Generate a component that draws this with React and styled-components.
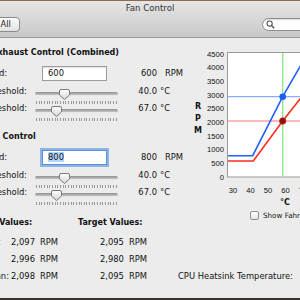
import React from "react";
import styled, { createGlobalStyle } from "styled-components";

const GlobalStyle = createGlobalStyle`
  html, body {
    margin: 0;
    padding: 0;
    background: #3a322c;
  }
  body {
    width: 300px;
    height: 300px;
    overflow: hidden;
    font-family: "DejaVu Sans", "Noto Sans", sans-serif;
  }
`;

const Screen = styled.div`
  width: 300px;
  height: 300px;
  overflow: hidden;
  display: flex;
  flex-direction: column;
  background: #3a322c;
  border-top: 1px solid #8b6a4f;
  box-sizing: border-box;
`;

const Window = styled.div`
  width: 420px;
  height: 297px;
  margin-left: -60px;
  flex-shrink: 0;
  background: #ececec;
  display: flex;
  flex-direction: column;
  font-size: 8.4px;
  color: #111;
`;

const Toolbar = styled.div`
  height: 36px;
  border-bottom: 1px solid #9a9a9a;
  background: linear-gradient(#e6e6e6, #c8c8c8);
  display: flex;
  flex-direction: column;
`;

const Title = styled.div`
  height: 15px;
  line-height: 15px;
  text-align: center;
  font-size: 8.6px;
  color: #333;
`;

const ToolRow = styled.div`
  display: flex;
  justify-content: space-between;
  align-items: flex-start;
  padding: 1px 8px 0 26px;
`;

const ShowAll = styled.button`
  width: 54px;
  height: 15px;
  padding: 0;
  border: 1px solid #8a8a8a;
  border-radius: 4px;
  background: linear-gradient(#fdfdfd, #e2e2e2);
  font: inherit;
  font-size: 8.4px;
  color: #222;
  line-height: 13px;
`;

const Search = styled.div`
  width: 90px;
  height: 13px;
  margin-top: 1px;
  box-sizing: border-box;
  border: 1px solid #8e8e8e;
  border-radius: 7px;
  background: #fff;
  box-shadow: inset 0 1px 1px rgba(0, 0, 0, 0.15);
  display: flex;
  align-items: center;
  padding-left: 3px;
`;

const Content = styled.div`
  display: flex;
  padding-left: 15px;
`;

const LeftPanel = styled.div`
  width: 239px;
  flex-shrink: 0;
  padding-top: 9px;
  display: flex;
  flex-direction: column;
`;

const Section = styled.section`
  display: flex;
  flex-direction: column;
  margin-top: ${(p) => p.$top || 0}px;
`;

const Heading = styled.div`
  height: 12px;
  line-height: 12px;
  font-size: 8px;
  font-weight: bold;
  white-space: nowrap;
  text-indent: ${(p) => p.$indent || 0}px;
`;

const FieldGrid = styled.div`
  display: grid;
  grid-template-columns: 80px 83px 39px auto;
  grid-template-rows: 18px 17px 18px;
  align-items: center;
  margin-top: 5px;
  white-space: nowrap;
`;

const Label = styled.span`
  white-space: nowrap;
`;

const Field = styled.div`
  width: 65px;
  height: 15px;
  margin-left: 7px;
  box-sizing: border-box;
  border: 1px solid ${(p) => (p.$focused ? "#5b8fd6" : "#9c9c9c")};
  background: #fff;
  box-shadow: ${(p) =>
    p.$focused
      ? "0 0 0 2px rgba(110, 160, 230, 0.75)"
      : "inset 0 1px 1px rgba(0,0,0,0.12)"};
  padding-left: 5px;
  line-height: 13px;
`;

const Selected = styled.span`
  background: ${(p) => (p.$on ? "#b5d5fe" : "transparent")};
`;

const Number = styled.span`
  text-align: right;
`;

const Unit = styled.span`
  padding-left: ${(p) => p.$gap}px;
`;

const SliderBox = styled.div`
  position: relative;
  width: 83px;
  height: 16px;
  margin-top: 12px;
`;

const Track = styled.div`
  position: absolute;
  left: 0;
  right: 0;
  top: 3px;
  height: 3px;
  border-radius: 2px;
  background: linear-gradient(#8f8f8f, #c4c4c4);
  border-bottom: 1px solid #e8e8e8;
`;

const Ticks = styled.div`
  position: absolute;
  left: 1px;
  right: 1px;
  top: 12px;
  height: 3px;
  display: flex;
  justify-content: space-between;
`;

const Tick = styled.i`
  width: 1px;
  height: 3px;
  background: #9a9a9a;
`;

const Thumb = styled.svg`
  position: absolute;
  top: 0;
`;

const Values = styled.section`
  margin-top: 16px;
  display: flex;
  flex-direction: column;
  white-space: nowrap;
`;

const ValuesHead = styled.div`
  display: flex;
  padding-left: 7px;
  height: 12px;
  line-height: 12px;
  font-size: 8px;
  font-weight: bold;
`;

const HeadCell = styled.span`
  width: ${(p) => p.$w}px;
`;

const ValuesGrid = styled.div`
  display: grid;
  grid-template-columns: 39px 46px 90px auto;
  grid-auto-rows: 17px;
  align-items: center;
  padding-left: 17px;
  margin-top: 4px;
`;

const Reading = styled.span`
  text-align: right;
`;

const Extra = styled.span`
  padding-left: 31px;
`;

const ExtraValue = styled.span`
  padding-left: 14px;
`;

const RightPanel = styled.div`
  margin-top: 7px;
  display: flex;
  flex-direction: column;
`;

const ChartRow = styled.div`
  display: flex;
`;

const AxisTitle = styled.div`
  width: 8px;
  padding-top: 56px;
  display: flex;
  flex-direction: column;
  align-items: center;
  font-size: 8px;
  font-weight: bold;
  line-height: 12px;
`;

const AxisUnit = styled.div`
  height: 12px;
  line-height: 12px;
  padding-left: 86px;
  font-size: 8px;
  font-weight: bold;
`;

const CheckRow = styled.label`
  height: 12px;
  display: flex;
  align-items: center;
  gap: 4px;
  padding-left: 56px;
  white-space: nowrap;
  font-size: 7.2px;
`;

const Box = styled.span`
  width: 9px;
  height: 9px;
  box-sizing: border-box;
  border: 1px solid #8e8e8e;
  border-radius: 2px;
  background: linear-gradient(#ffffff, #e6e6e6);
`;

const Slider = ({ pos }) => (
  <SliderBox>
    <Track />
    <Ticks>
      {Array.from({ length: 31 }, (_, i) => (
        <Tick key={i} />
      ))}
    </Ticks>
    <Thumb
      width="11"
      height="11"
      viewBox="0 0 11 11"
      style={{ left: `${pos * 83 - 5.5}px` }}
    >
      <defs>
        <linearGradient id="thumbFill" x1="0" y1="0" x2="0" y2="1">
          <stop offset="0" stopColor="#ffffff" />
          <stop offset="1" stopColor="#d4d4d4" />
        </linearGradient>
      </defs>
      <path
        d="M2 0.5 H9 Q10.5 0.5 10.5 2 V6 L5.5 10.5 L0.5 6 V2 Q0.5 0.5 2 0.5 Z"
        fill="url(#thumbFill)"
        stroke="#7a7a7a"
        strokeWidth="1"
      />
    </Thumb>
  </SliderBox>
);

const ControlBlock = ({ title, indent, top, speed, focused, lower, upper }) => (
  <Section $top={top}>
    <Heading $indent={indent}>{title}</Heading>
    <FieldGrid>
      <Label>Base Speed:</Label>
      <Field $focused={focused}>
        <Selected $on={focused}>{speed}</Selected>
      </Field>
      <Number>{speed}</Number>
      <Unit $gap={8}>RPM</Unit>

      <Label>Lower Threshold:</Label>
      <Slider pos={lower.pos} />
      <Number>{lower.value}</Number>
      <Unit $gap={3}>°C</Unit>

      <Label>Upper Threshold:</Label>
      <Slider pos={upper.pos} />
      <Number>{upper.value}</Number>
      <Unit $gap={3}>°C</Unit>
    </FieldGrid>
  </Section>
);

const yTicks = [4500, 4000, 3500, 3000, 2500, 2000, 1500, 1000, 500, 0];
const xTicks = [30, 40, 50, 60, 70];
const yOf = (v) => 132 - (v * 123) / 4500;
const xOf = (t) => 31 + (t - 30) * 1.75;

const Chart = () => (
  <svg width="140" height="152" viewBox="0 0 140 152">
    <rect x="25.5" y="7.5" width="120" height="124.5" fill="#fff" stroke="#9a9a9a" />
    {yTicks.map((v) => (
      <text
        key={v}
        x="22"
        y={yOf(v) + 2.8}
        textAnchor="end"
        fontSize="7.6"
        fontFamily="Liberation Sans, Arial, sans-serif"
        fill="#111"
      >
        {v}
      </text>
    ))}
    {xTicks.map((t) => (
      <text
        key={t}
        x={xOf(t)}
        y="147.7"
        textAnchor="middle"
        fontSize="7.6"
        fontFamily="Liberation Sans, Arial, sans-serif"
        fill="#111"
      >
        {t}
      </text>
    ))}
    <line x1="80.7" y1="8" x2="80.7" y2="131.5" stroke="#8ee68e" strokeWidth="1.4" />
    <line x1="26" y1="51.7" x2="140" y2="51.7" stroke="#86acff" strokeWidth="1.3" />
    <line x1="26" y1="76" x2="140" y2="76" stroke="#ffa0a0" strokeWidth="1.3" />
    <polyline
      points="26,110.7 50.7,110.7 80.7,51.7 98,21.7 106.5,8"
      fill="none"
      stroke="#2160ff"
      strokeWidth="1.6"
    />
    <polyline
      points="26,116 51.3,116 80.7,76 98,54 135,8"
      fill="none"
      stroke="#ff2b1c"
      strokeWidth="1.6"
    />
    <circle cx="80.7" cy="51.7" r="3.3" fill="#1d5cff" />
    <circle cx="80.7" cy="76" r="3.2" fill="#8c1010" stroke="#d02020" strokeWidth="0.8" />
  </svg>
);

export default function App() {
  return (
    <>
      <GlobalStyle />
      <Screen>
        <Window>
          <Toolbar>
            <Title>Fan Control</Title>
            <ToolRow>
              <ShowAll>Show All</ShowAll>
              <Search>
                <svg width="9" height="9" viewBox="0 0 9 9">
                  <circle cx="3.6" cy="3.6" r="2.6" fill="none" stroke="#555" strokeWidth="1.1" />
                  <line x1="5.5" y1="5.5" x2="8.2" y2="8.2" stroke="#555" strokeWidth="1.4" />
                </svg>
              </Search>
            </ToolRow>
          </Toolbar>

          <Content>
            <LeftPanel>
              <ControlBlock
                title="Intake & Exhaust Control (Combined)"
                indent={-4}
                speed="600"
                lower={{ pos: 0.35, value: "40.0" }}
                upper={{ pos: 0.265, value: "67.0" }}
              />
              <ControlBlock
                title="Intake Fan Control"
                indent={-2.5}
                top={14}
                speed="800"
                focused
                lower={{ pos: 0.35, value: "40.0" }}
                upper={{ pos: 0.265, value: "67.0" }}
              />

              <Values>
                <ValuesHead>
                  <HeadCell $w={116}>Current Values:</HeadCell>
                  <HeadCell $w={90}>Target Values:</HeadCell>
                </ValuesHead>
                <ValuesGrid>
                  <span>Intake:</span>
                  <Reading>
                    2,097<Unit $gap={5}>RPM</Unit>
                  </Reading>
                  <Reading>
                    2,095<Unit $gap={5}>RPM</Unit>
                  </Reading>
                  <span />

                  <span>HDD:</span>
                  <Reading>
                    2,996<Unit $gap={5}>RPM</Unit>
                  </Reading>
                  <Reading>
                    2,980<Unit $gap={5}>RPM</Unit>
                  </Reading>
                  <span />

                  <span>CPU Fan:</span>
                  <Reading>
                    2,098<Unit $gap={5}>RPM</Unit>
                  </Reading>
                  <Reading>
                    2,095<Unit $gap={5}>RPM</Unit>
                  </Reading>
                  <Extra>
                    CPU Heatsink Temperature:<ExtraValue>58.6 °C</ExtraValue>
                  </Extra>
                </ValuesGrid>
              </Values>
            </LeftPanel>

            <RightPanel>
              <ChartRow>
                <AxisTitle>
                  <span>R</span>
                  <span>P</span>
                  <span>M</span>
                </AxisTitle>
                <Chart />
              </ChartRow>
              <AxisUnit>°C</AxisUnit>
              <CheckRow>
                <Box />
                Show Fahrenheit
              </CheckRow>
            </RightPanel>
          </Content>
        </Window>
      </Screen>
    </>
  );
}
